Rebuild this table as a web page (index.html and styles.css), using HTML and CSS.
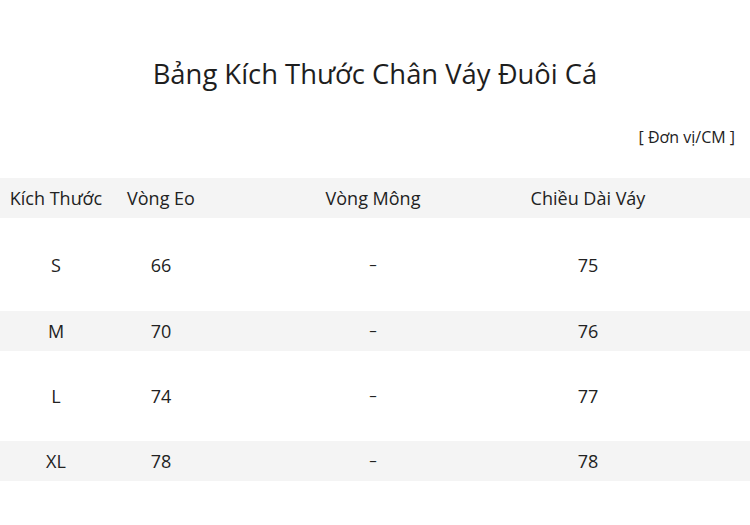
FILE: index.html
```html
<!DOCTYPE html>
<html lang="vi">
<head>
<meta charset="utf-8">
<link rel="stylesheet" href="styles.css">
</head>
<body>
<div class="page">
  <h1 class="title">Bảng Kích Thước Chân Váy Đuôi Cá</h1>
  <div class="unit">[ Đơn vị/CM ]</div>
  <div class="table">
    <div class="row head">
      <div class="cell">Kích Thước</div>
      <div class="cell">Vòng Eo</div>
      <div class="cell">Vòng Mông</div>
      <div class="cell">Chiều Dài Váy</div>
      <div class="cell"></div>
    </div>
    <div class="row tall">
      <div class="cell">S</div>
      <div class="cell">66</div>
      <div class="cell dash">–</div>
      <div class="cell">75</div>
      <div class="cell"></div>
    </div>
    <div class="row band">
      <div class="cell">M</div>
      <div class="cell">70</div>
      <div class="cell dash">–</div>
      <div class="cell">76</div>
      <div class="cell"></div>
    </div>
    <div class="row tall short">
      <div class="cell">L</div>
      <div class="cell">74</div>
      <div class="cell dash">–</div>
      <div class="cell">77</div>
      <div class="cell"></div>
    </div>
    <div class="row band">
      <div class="cell">XL</div>
      <div class="cell">78</div>
      <div class="cell dash">–</div>
      <div class="cell">78</div>
      <div class="cell"></div>
    </div>
  </div>
</div>
</body>
</html>
```
FILE: styles.css
```css
html, body {
  margin: 0;
  padding: 0;
  background: #fff;
}
body {
  font-family: "Open Sans", "Noto Sans", sans-serif;
  color: #222;
  width: 750px;
  height: 525px;
  overflow: hidden;
}
.page {
  padding-top: 53px;
}
.title {
  margin: 0;
  text-align: center;
  font-size: 27.4px;
  font-weight: 400;
  line-height: 42px;
  color: #1e1e1e;
}
.unit {
  margin-top: 31px;
  text-align: right;
  padding-right: 15px;
  font-size: 16px;
  line-height: 22px;
  color: #222;
}
.table {
  margin-top: 30px;
}
.row {
  display: grid;
  grid-template-columns: 112px 98px 326px 104px 1fr;
  align-items: center;
  font-size: 18px;
  color: #222;
}
.cell {
  display: flex;
  justify-content: center;
  white-space: nowrap;
}
.head {
  height: 40px;
  background: #f4f4f4;
}
.tall {
  height: 93px;
}
.tall.short {
  height: 90px;
}
.band {
  height: 40px;
  background: #f4f4f4;
}
.dash {
  font-size: 15px;
  position: relative;
  top: -1px;
}
```
